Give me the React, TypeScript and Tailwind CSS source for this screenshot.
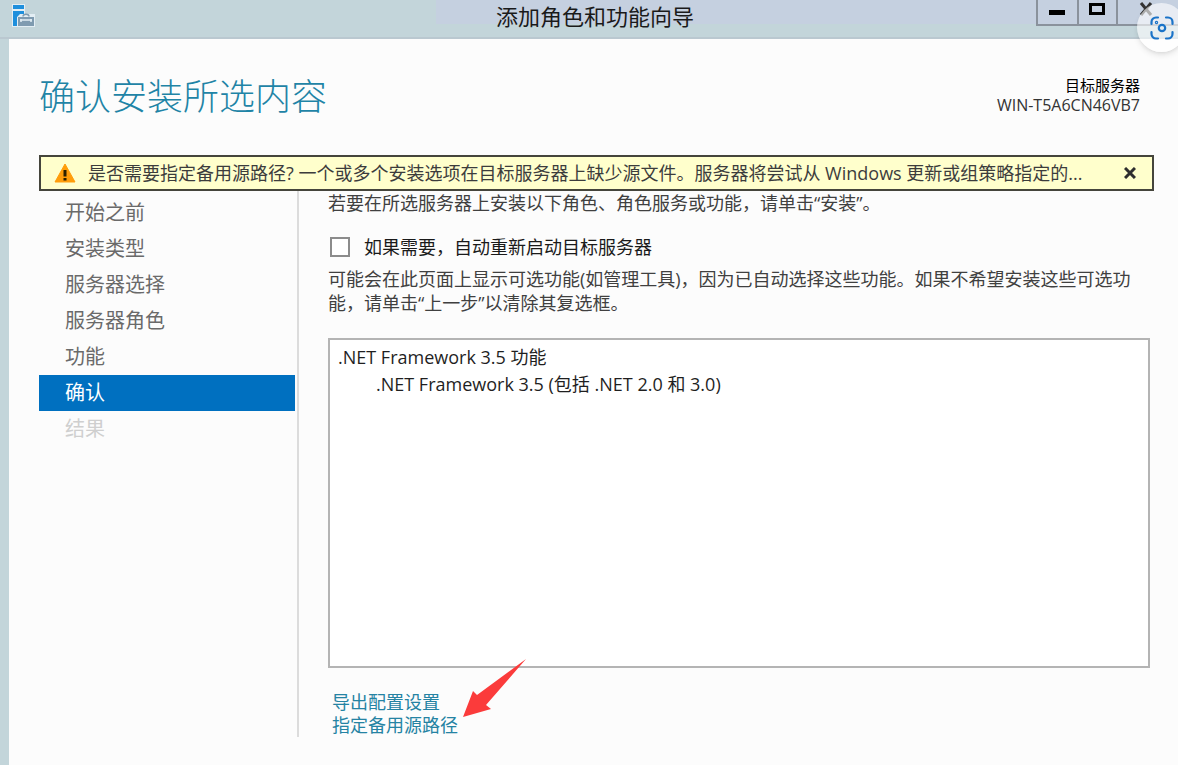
import { useState } from "react";

const STEPS = [
  { label: "开始之前", state: "done" },
  { label: "安装类型", state: "done" },
  { label: "服务器选择", state: "done" },
  { label: "服务器角色", state: "done" },
  { label: "功能", state: "done" },
  { label: "确认", state: "current" },
  { label: "结果", state: "disabled" },
];

const STEP_STYLES: Record<string, string> = {
  done: "text-[#6a6a6a]",
  current: "bg-[#0070c0] text-white",
  disabled: "text-[#cfcfcf]",
};

function ServerIcon() {
  return (
    <svg viewBox="0 0 24 24" className="h-6 w-6" aria-hidden="true">
      <path d="M0 0h13v10h10v13H0z" fill="#e3eef4" />
      <path d="M1 1h11v4H1zM1 7h11v3H8l-3 3v9H1z" fill="#1e8fdc" />
      <path d="M6 13h16v9H6z" fill="#7f9bb0" />
      <path d="M11 12.500c0-3 6-3 6 0" fill="none" stroke="#7f9bb0" strokeWidth="1.500" />
      <path d="M8 16h12M9 15v3M19 15v3" stroke="#e3eef4" strokeWidth="1.500" />
    </svg>
  );
}

function WarningIcon() {
  return (
    <svg viewBox="0 0 22 20" className="h-5 w-[22px] shrink-0" aria-hidden="true">
      <path d="M11 1 21 19H1z" fill="#ff9d0a" stroke="#ff9d0a" strokeLinejoin="round" />
      <path d="M9.500 7h3v6.500h-3zM9.500 15h3v2.500h-3z" fill="#2b2000" />
    </svg>
  );
}

function TitleBar() {
  return (
    <header className="relative flex h-[39px] items-start justify-between border-b-2 border-[#bac8d0] bg-[#c3d5da] bg-[linear-gradient(#c5d0e0,#c5d0e0)] bg-[length:63%_24px] bg-right-top bg-no-repeat pl-3">
      <div className="w-[142px] pt-1">
        <ServerIcon />
      </div>
      <h1 className="pt-px text-[22px] leading-[30px] text-[#1a1a1a]">添加角色和功能向导</h1>
      <div className="flex h-[26px] w-[142px] border-b-2 border-l-2 border-[#8a929c] text-black">
        <button aria-label="最小化" className="flex w-[41px] justify-center border-r-2 border-[#8a929c] pt-[10px]">
          <span className="h-[5px] w-4 bg-black" />
        </button>
        <button aria-label="最大化" className="flex w-[39px] justify-center border-r-2 border-[#8a929c] pt-[3px]">
          <span className="h-3 w-4 border-[3px] border-black" />
        </button>
        <button aria-label="关闭" className="flex flex-1 justify-center pr-1 pt-[2px]">
          <svg viewBox="0 0 14 14" className="h-[14px] w-[14px]">
            <path d="m2 1 10 12M12 1 2 13" stroke="#333" strokeWidth="3" />
          </svg>
        </button>
      </div>
      <button
        aria-label="视觉搜索"
        className="absolute -right-2 top-[3px] flex h-[49px] w-[49px] items-center justify-center rounded-full bg-white/60 shadow-md"
      >
        <svg viewBox="0 0 24 24" className="h-6 w-6" fill="none" stroke="#1a73c8" strokeWidth="2.200" strokeLinecap="round">
          <path d="M1.500 8V6a4.500 4.500 0 0 1 4.500-4.500h2M16 1.500h2A4.500 4.500 0 0 1 22.500 6v2M22.500 16v2a4.500 4.500 0 0 1-4.500 4.500h-2M8 22.500H6A4.500 4.500 0 0 1 1.500 18v-2" />
          <circle cx="12" cy="12" r="3.200" />
          <circle cx="6.500" cy="6.500" r=".6" />
        </svg>
      </button>
    </header>
  );
}

function SourceAlert() {
  const [open, setOpen] = useState(true);

  return (
    <div className="h-9">
      {open && (
        <div role="alert" className="flex h-full items-center border-2 border-[#45453c] bg-[#ffffcc] pl-[13px] pr-4">
          <WarningIcon />
          <p className="ml-3 flex-1 truncate text-lg leading-6 text-[#3c3c3c]">
            是否需要指定备用源路径? 一个或多个安装选项在目标服务器上缺少源文件。服务器将尝试从 Windows 更新或组策略指定的...
          </p>
          <button aria-label="关闭" onClick={() => setOpen(false)}>
            <svg viewBox="0 0 12 12" className="h-3 w-3">
              <path d="m1 1 10 10M11 1 1 11" stroke="#2e2e2e" strokeWidth="3" />
            </svg>
          </button>
        </div>
      )}
    </div>
  );
}

function Steps() {
  return (
    <nav className="w-[260px] shrink-0 border-r-2 border-[#dcdcdc] pr-[2px] pt-1">
      <ul>
        {STEPS.map((step) => (
          <li key={step.label}>
            <button
              disabled={step.state === "disabled"}
              aria-current={step.state === "current" ? "step" : undefined}
              className={`block h-9 w-full pl-[26px] text-left text-xl leading-9 ${STEP_STYLES[step.state]}`}
            >
              {step.label}
            </button>
          </li>
        ))}
      </ul>
    </nav>
  );
}

function Confirmation() {
  return (
    <section className="flex flex-1 flex-col pl-[29px] pr-1 text-lg leading-6 text-[#404040]">
      <p>若要在所选服务器上安装以下角色、角色服务或功能，请单击“安装”。</p>
      <label className="mt-5 flex items-center gap-[14px] text-[#1a1a1a]">
        <input type="checkbox" className="ml-[2px] h-5 w-5 appearance-none border-2 border-[#8c8c8c] bg-white checked:bg-[#0070c0]" />
        如果需要，自动重新启动目标服务器
      </label>
      <p className="mt-2">
        可能会在此页面上显示可选功能(如管理工具)，因为已自动选择这些功能。如果不希望安装这些可选功能，请单击“上一步”以清除其复选框。
      </p>
      <ul className="mt-[23px] h-[330px] border-2 border-[#b4b4b4] bg-white px-2 pt-1 leading-[27px] text-[#1f1f1f]">
        <li>
          .NET Framework 3.5 功能
          <ul className="pl-[38px]">
            <li>.NET Framework 3.5 (包括 .NET 2.0 和 3.0)</li>
          </ul>
        </li>
      </ul>
      <div className="mt-[23px] flex items-start pl-1">
        <div className="flex flex-col items-start leading-[23px] text-[#2583a3]">
          <a href="#export">导出配置设置</a>
          <a href="#source">指定备用源路径</a>
        </div>
        <svg viewBox="0 0 64 58" className="-mt-8 ml-1 h-[58px] w-16" aria-hidden="true">
          <path d="M64 0 24 46l5 4L1 58l10-26 4 4z" fill="#fb3b3b" />
        </svg>
      </div>
    </section>
  );
}

export default function App() {
  return (
    <div className="flex min-h-screen flex-col bg-[#c3d5da] font-['Open_Sans','Noto_Sans_CJK_SC',sans-serif]">
      <TitleBar />
      <main className="ml-[9px] flex flex-1 flex-col bg-[#fcfcfc] pb-7 pl-[30px] pr-6">
        <div className="flex items-start justify-between pr-[14px] pt-8">
          <h2 className="text-4xl font-light leading-[52px] text-[#1f84a6]">确认安装所选内容</h2>
          <div className="pt-1 text-right text-base leading-5 text-[#333]">
            <p className="text-[15px] text-black">目标服务器</p>
            <p>WIN-T5A6CN46VB7</p>
          </div>
        </div>
        <div className="mt-8">
          <SourceAlert />
        </div>
        <div className="flex flex-1">
          <Steps />
          <Confirmation />
        </div>
      </main>
    </div>
  );
}
